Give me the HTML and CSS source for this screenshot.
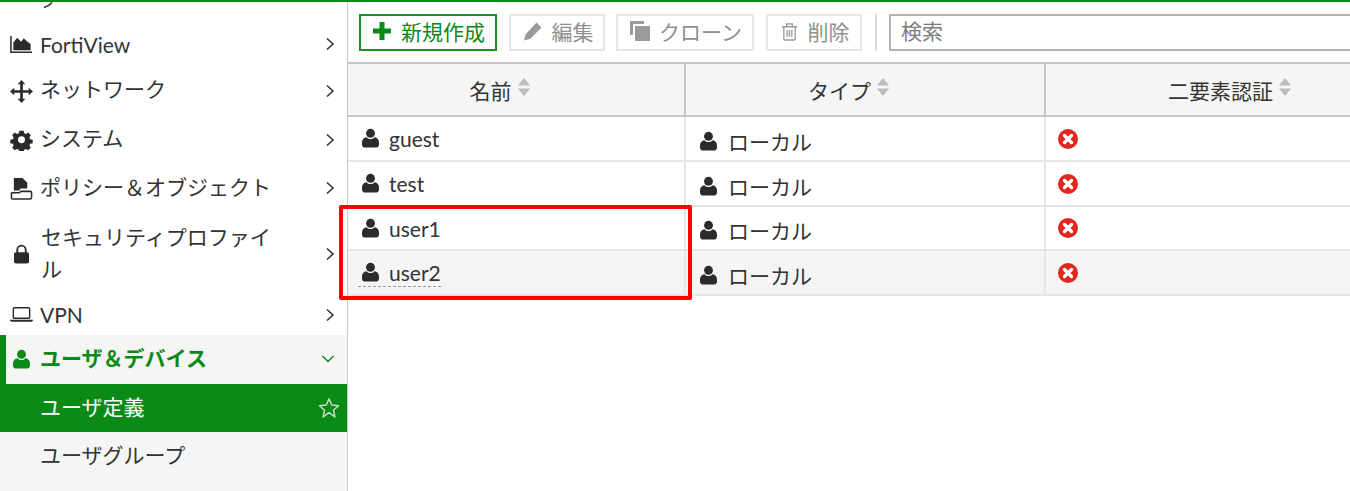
FILE: index.html
```html
<!DOCTYPE html>
<html lang="ja">
<head>
<meta charset="utf-8">
<title>ユーザ定義</title>
<link rel="stylesheet" href="styles.css">
</head>
<body>
<svg class="defs" width="0" height="0">
  <symbol id="i-user" viewBox="0 0 16 18"><circle cx="8" cy="4.6" r="4.2"/><path d="M4.2 8.2C5.2 9.4 6.5 10 8 10s2.800-.6 3.800-1.800C14.400 8.500 16 10.300 16 13.500V15c0 1.700-1.300 3-3 3H3c-1.700 0-3-1.300-3-3v-1.500C0 10.300 1.600 8.500 4.200 8.200z"/></symbol>
  <symbol id="i-chev" viewBox="0 0 10 14"><path d="M2 1.500 8 7l-6 5.500" fill="none" stroke="currentColor" stroke-width="1.600"/></symbol>
  <symbol id="i-sort" viewBox="0 0 14 20"><path d="M7 0l6.500 8H.5zM.5 11h13L7 19z"/></symbol>
  <symbol id="i-x" viewBox="0 0 20 20"><circle cx="10" cy="10" r="10" fill="#e3261e"/><path d="M6.500 6.500l7 7M13.500 6.500l-7 7" stroke="#fff" stroke-width="3.400" stroke-linecap="round"/></symbol>
</svg>
<div class="app">
  <nav class="side">
    <div class="clipped"><svg class="clip-mark" viewBox="0 0 10 6"><path d="M1 5.500C4 4.500 7 3 9 .5" fill="none" stroke="#333" stroke-width="1.500"/></svg></div>
    <a class="item forti latin">
      <svg class="ico" viewBox="0 0 24 18"><path d="M1 0v17h22" fill="none" stroke="#2b2b2b" stroke-width="1.600"/><path d="M3.500 15V7l4-5 4 4 3-3.500 3 3 4 3v6.500z" fill="#2b2b2b"/></svg>
      <span class="label">FortiView</span><svg class="chev"><use href="#i-chev"/></svg>
    </a>
    <a class="item up">
      <svg class="ico" viewBox="0 0 24 24"><path d="M12 0l4 4.500h-2.600v6.100h6.100V8l4.500 4-4.500 4v-2.600h-6.100v6.100H16L12 24l-4-4.500h2.600v-6.100H4.500V16L0 12l4.500-4v2.600h6.100V4.500H8z" fill="#2b2b2b"/></svg>
      <span class="label">ネットワーク</span><svg class="chev"><use href="#i-chev"/></svg>
    </a>
    <a class="item up">
      <svg class="ico" viewBox="0 0 24 24"><path fill-rule="evenodd" fill="#2b2b2b" d="M9.500 2h5l.6 3 2.100.9 2.600-1.700 3 3-1.700 2.600.9 2.100 3 .6v4l-3 .6-.9 2.100 1.700 2.600-3 3-2.600-1.700-2.100.9-.6 3h-5l-.6-3-2.100-.9-2.600 1.700-3-3 1.700-2.600-.9-2.100-3-.6v-4l3-.6.9-2.100-1.700-2.600 3-3 2.600 1.700 2.100-.9zM12 8.500a4 4 0 1 0 0 8 4 4 0 0 0 0-8z" transform="translate(1.200 1) scale(.9)"/></svg>
      <span class="label">システム</span><svg class="chev"><use href="#i-chev"/></svg>
    </a>
    <a class="item">
      <svg class="ico" viewBox="0 0 24 24"><path d="M4 1h9l5 5v6h-6.500c-1 0-1.500 1-1.500 2H4z" fill="#2b2b2b"/><path d="M2 16.500h7.500c1 0 1-1.500 2-1.500H21c.8 0 1.500.7 1.500 1.500v5c0 .8-.7 1.500-1.500 1.500H3c-.8 0-1.500-.7-1.500-1.500v-4.500z" fill="none" stroke="#2b2b2b" stroke-width="1.600"/></svg>
      <span class="label">ポリシー＆オブジェクト</span><svg class="chev"><use href="#i-chev"/></svg>
    </a>
    <a class="item tall">
      <svg class="ico lock" viewBox="0 0 16 20"><path d="M3.500 9V5.500a4.500 4.500 0 0 1 9 0V9" fill="none" stroke="#2b2b2b" stroke-width="2"/><rect y="8" width="16" height="12" rx="2" fill="#2b2b2b"/></svg>
      <span class="label wrap">セキュリティプロファイル</span><svg class="chev"><use href="#i-chev"/></svg>
    </a>
    <a class="item vpn latin">
      <svg class="ico" viewBox="0 0 24 16"><rect x="3.500" y="1" width="17" height="11" rx="1" fill="none" stroke="#2b2b2b" stroke-width="1.500"/><path d="M0 13.500h24c0 1.200-.8 2-2 2H2c-1.200 0-2-.8-2-2z" fill="#2b2b2b"/></svg>
      <span class="label">VPN</span><svg class="chev"><use href="#i-chev"/></svg>
    </a>
    <div class="sub-area">
      <a class="item group">
        <svg class="ico user-green"><use href="#i-user"/></svg>
        <span class="label">ユーザ＆デバイス</span>
        <svg class="chev-down" viewBox="0 0 14 10"><path d="M1.500 2 7 7.500 12.500 2" fill="none" stroke="currentColor" stroke-width="1.500"/></svg>
      </a>
      <a class="item sub active">
        <span class="label">ユーザ定義</span>
        <svg class="star" viewBox="0 0 24 24"><path d="M12 2l3 6.800 7.400.7-5.600 4.900 1.700 7.300L12 17l-6.500 4.700 1.700-7.300L1.600 9.500 9 8.800z" fill="none" stroke="#c4e3c6" stroke-width="1.600" stroke-linejoin="round"/></svg>
      </a>
      <a class="item sub"><span class="label">ユーザグループ</span></a>
    </div>
  </nav>
  <main class="main">
    <div class="toolbar">
      <button class="btn primary"><svg class="btn-ico plus" viewBox="0 0 18 18"><path d="M6.500 0h5v6.500H18v5h-6.500V18h-5v-6.500H0v-5h6.500z" fill="#0c8a18"/></svg>新規作成</button>
      <button class="btn edit"><svg class="btn-ico" viewBox="0 0 20 20"><path d="M13.500 1.500l5 5L7 18l-6 1.500L2.500 13.500z" fill="#9a9a9a"/></svg>編集</button>
      <button class="btn clone"><svg class="btn-ico" viewBox="0 0 20 20"><path d="M0 0h14v3H3v11H0z" fill="#9a9a9a"/><rect x="5" y="5" width="15" height="15" fill="#9a9a9a"/></svg>クローン</button>
      <button class="btn del"><svg class="btn-ico trash" viewBox="0 0 18 20"><path d="M1 5h16M6 5V2h6v3M3 5v13c0 .6.400 1 1 1h10c.6 0 1-.4 1-1V5M6.500 8.500v7M9 8.500v7M11.500 8.500v7" fill="none" stroke="#9a9a9a" stroke-width="1.400"/></svg>削除</button>
      <span class="sep"></span>
      <div class="search">検索</div>
    </div>
    <div class="table">
      <div class="th">名前<svg class="sort"><use href="#i-sort"/></svg></div>
      <div class="th">タイプ<svg class="sort"><use href="#i-sort"/></svg></div>
      <div class="th">二要素認証<svg class="sort"><use href="#i-sort"/></svg></div>

      <div class="td name"><svg class="u"><use href="#i-user"/></svg><span class="who">guest</span></div>
      <div class="td kind"><svg class="u"><use href="#i-user"/></svg>ローカル</div>
      <div class="td"><svg class="x"><use href="#i-x"/></svg></div>

      <div class="td name"><svg class="u"><use href="#i-user"/></svg><span class="who">test</span></div>
      <div class="td kind"><svg class="u"><use href="#i-user"/></svg>ローカル</div>
      <div class="td"><svg class="x"><use href="#i-x"/></svg></div>

      <div class="td name"><svg class="u"><use href="#i-user"/></svg><span class="who">user1</span></div>
      <div class="td kind"><svg class="u"><use href="#i-user"/></svg>ローカル</div>
      <div class="td"><svg class="x"><use href="#i-x"/></svg></div>

      <div class="td name alt"><span class="dashed"><svg class="u"><use href="#i-user"/></svg><span class="who">user2</span></span></div>
      <div class="td kind alt"><svg class="u"><use href="#i-user"/></svg>ローカル</div>
      <div class="td alt"><svg class="x"><use href="#i-x"/></svg></div>
    </div>
  </main>
</div>
<div class="callout"></div>
</body>
</html>
```

FILE: styles.css
```css
* { box-sizing: border-box; }
html, body { margin: 0; height: 100%; overflow: hidden; }
body {
  font-family: Lato, "Noto Sans CJK JP", sans-serif;
  font-size: 21px;
  color: #333;
  background: #fff;
}
.defs { position: absolute; }
.app {
  display: flex;
  height: 491px;
  border-top: 2px solid #0c8a18;
}
.side {
  width: 348px;
  flex: none;
  border-right: 1px solid #c8c8c8;
  display: flex;
  flex-direction: column;
}
.clipped { height: 19px; padding-left: 43px; }
.clip-mark { display: block; width: 10px; height: 6px; }
.item {
  display: flex;
  align-items: center;
  height: 48.500px;
  padding: 0 10px;
  flex: none;
  color: #333;
}
.item > .label { padding-bottom: 2px; }
.item.latin > .label { padding-bottom: 0; }
.item.forti > .label { padding-top: 1px; }
.item.up > .label { padding-bottom: 4px; }
.forti { height: 46px; }
.tall { height: 82px; }
.vpn { height: 40px; }
.ico { width: 23px; height: 23px; flex: none; margin-right: 7px; }
.lock { width: 15px; height: 20px; margin: 0 12px 0 4px; }
.label { flex: 1; line-height: 32px; white-space: nowrap; }
.label.wrap { white-space: normal; flex: none; width: 236px; }
.chev { width: 10px; height: 14px; margin-left: auto; margin-right: 2px; flex: none; color: #333; }
.sub-area { flex: 1; background: #f5f5f5; }
.group {
  height: 49px;
  border-left: 6px solid #0c8a18;
  padding-left: 7px;
  color: #0c8a18;
  font-weight: 700;
}
.user-green { width: 17px; height: 20px; margin-right: 10px; fill: #0c8a18; }
.chev-down { width: 14px; height: 10px; margin-right: 2px; color: #0c8a18; }
.sub { height: 48px; padding-left: 40px; }
.active { background: #0c8a18; color: #fff; padding-right: 7px; }
.star { width: 22px; height: 22px; flex: none; }

.main { flex: 1; min-width: 0; }
.toolbar {
  height: 60px;
  padding: 12px 0 0 11px;
  display: flex;
  align-items: flex-start;
  gap: 12px;
}
.btn {
  flex: none;
  height: 37px;
  border: 2px solid #e6e6e6;
  background: #fff;
  font: inherit;
  color: #8f8f8f;
  padding: 0 0 3px 2px;
  display: flex;
  align-items: center;
  justify-content: center;
  white-space: nowrap;
}
.btn.primary { width: 138px; border-color: #18952a; color: #0c8a18; }
.btn.edit { width: 96px; }
.btn.clone { width: 138px; margin-left: -1px; }
.btn.del { width: 96px; }
.btn-ico { width: 20px; height: 20px; margin-right: 9px; flex: none; }
.btn-ico.plus { width: 18px; height: 18px; margin-right: 10px; }
.btn-ico.trash { width: 17px; height: 19px; margin-right: 10px; }
.sep { flex: none; width: 2px; height: 37px; background: #ddd; margin-left: 1px; }
.search {
  flex: 1;
  min-width: 0;
  height: 37px;
  border: 2px solid #b4b4b4;
  border-right: 0;
  padding-left: 10px;
  line-height: 30px;
  color: #7d7d7d;
}
.table {
  display: grid;
  grid-template-columns: 338px 360px 1fr;
  grid-template-rows: 53px;
  grid-auto-rows: 44.750px;
  border-top: 2px solid #c6c6c6;
}
.th {
  height: 53px;
  display: flex;
  align-items: center;
  justify-content: center;
  padding-right: 32px;
  background: #f5f5f5;
  border-right: 2px solid #c6c6c6;
  border-bottom: 2px solid #c6c6c6;
}
.th:nth-child(3) { padding: 0 0 0 64px; border-right: 0; }
.sort { width: 14px; height: 19px; margin: -5px 0 0 5px; fill: #bdbdbd; flex: none; }
.td {
  display: flex;
  align-items: center;
  padding-left: 14px;
  border-right: 2px solid #e6e6e6;
  border-bottom: 2px solid #e6e6e6;
}
.name { padding-top: 2px; }
.kind { padding: 5px 0 0 14px; }
.td:nth-child(3n) { border-right: 0; padding-left: 12px; }
.alt { background: #f5f5f5; }
.u { width: 17px; height: 20px; margin-right: 10px; fill: #2b2b2b; flex: none; }
.name .u { margin-top: -2px; }
.who { line-height: 26px; }
.kind .u { margin-right: 11px; }
.dashed { display: flex; align-items: center; border-bottom: 1px dashed #999; margin-left: -4px; padding-left: 4px; height: 26px; }
.x { width: 20px; height: 20px; margin-top: 1px; }
.callout {
  position: absolute;
  left: 339px;
  top: 205px;
  width: 353px;
  height: 95px;
  border: 4px solid #f00;
  border-radius: 2px;
}
```
